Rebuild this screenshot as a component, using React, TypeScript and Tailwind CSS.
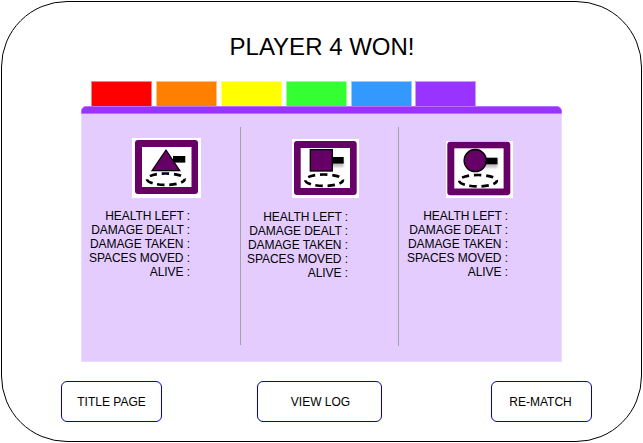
import React from "react";

type Shape = "triangle" | "square" | "circle";

const tabs = [
  "bg-[#ff0000] border-[#ff8080]",
  "bg-[#ff8000] border-[#ffc080]",
  "bg-[#ffff00] border-[#ffff80]",
  "bg-[#33ff33] border-[#99ff99]",
  "bg-[#3399ff] border-[#99ccff]",
  "bg-[#9933ff] border-[#cc99ff] -ml-px",
];

const stats = ["HEALTH LEFT :", "DAMAGE DEALT :", "DAMAGE TAKEN :", "SPACES MOVED :", "ALIVE :"];

function Gun({ x, y }: { x: number; y: number }) {
  return (
    <>
      <rect x={x} y={y + 2} width="15" height="8" fill="#999" filter="url(#soft)" opacity="0.6" />
      <rect x={x} y={y} width="15" height="6.6" fill="#000" />
    </>
  );
}

function Base({ cx, cy }: { cx: number; cy: number }) {
  return (
    <ellipse
      cx={cx}
      cy={cy}
      rx="18.8"
      ry="5.7"
      fill="none"
      stroke="#000"
      strokeWidth="2.7"
      strokeDasharray="7.2 4.7"
      strokeDashoffset="2"
    />
  );
}

function Piece({ shape }: { shape: Shape }) {
  const soft = (
    <defs>
      <filter id="soft" x="-50%" y="-50%" width="200%" height="200%">
        <feGaussianBlur stdDeviation="1.2" />
      </filter>
    </defs>
  );
  if (shape === "triangle") {
    return (
      <svg width="69" height="60" className="block bg-white">
        <rect x="3" y="2" width="63" height="54" rx="3" fill="#660066" />
        <rect x="10" y="9" width="49.5" height="40" fill="#fff" />
        <rect x="41" y="18" width="12.3" height="6.6" fill="#000" />
        <path d="M34 12 L47.8 32.6 H20 Z" fill="#660066" stroke="#000" strokeWidth="1.2" />
        <Base cx={33.8} cy={41.2} />
      </svg>
    );
  }
  if (shape === "square") {
    return (
      <svg width="67" height="59" className="block bg-white">
        {soft}
        <rect x="2" y="2" width="62.7" height="54" rx="3" fill="#660066" />
        <rect x="8.7" y="9" width="49.3" height="40" fill="#fff" />
        <Gun x={36.7} y={18} />
        <rect x="18.3" y="10.6" width="22" height="21.4" fill="#660066" stroke="#000" strokeWidth="1.3" />
        <Base cx={32.1} cy={41.2} />
      </svg>
    );
  }
  return (
    <svg width="67" height="57" className="block bg-white">
      {soft}
      <rect x="1.3" y="0.7" width="63" height="53.5" rx="3" fill="#660066" />
      <rect x="8.3" y="7.3" width="49.3" height="40.2" fill="#fff" />
      <Gun x={36.5} y={16.7} />
      <circle cx="29.2" cy="19.6" r="11.1" fill="#660066" stroke="#000" strokeWidth="1.3" />
      <Base cx={32} cy={39.7} />
    </svg>
  );
}

function Stats({ className }: { className: string }) {
  return (
    <div className={`text-right text-xs leading-[14px] tracking-[-0.06px] whitespace-nowrap ${className}`}>
      {stats.map((s) => (
        <div key={s}>{s}</div>
      ))}
    </div>
  );
}

function Button({ label, className }: { label: string; className: string }) {
  return (
    <button className={`h-[41px] rounded-[6px] border border-[#0000cc] bg-white text-xs ${className}`}>
      {label}
    </button>
  );
}

export default function App() {
  return (
    <div className="h-[443px] w-[643px] overflow-hidden bg-white p-px font-['Liberation_Sans',Arial,sans-serif] text-black">
      <main className="flex h-[441px] w-[641px] flex-col rounded-[66px] border border-black">
        <h1 className="mt-[31px] h-7 pl-px text-center text-[24px] leading-7">PLAYER 4 WON!</h1>
        <div className="mt-5 ml-[89px] flex gap-1">
          {tabs.map((c) => (
            <div key={c} className={`h-[25px] w-[61px] border border-b-0 ${c}`} />
          ))}
        </div>
        <section className="ml-[79px] h-[256px] w-[481px]">
          <div className="h-2 rounded-t-[5px] border border-[#b870ff] bg-[#9933ff]" />
          <div className="flex h-[248px] border border-t-0 border-[#ecdcff] bg-[#e5ccff]">
            <div className="w-[158px] pt-6">
              <div className="ml-[50px] h-[71px]">
                <Piece shape="triangle" />
              </div>
              <Stats className="w-[108px]" />
            </div>
            <div className="mt-[13px] h-[218px] w-px bg-[#a3a3a3]" />
            <div className="w-[157px] pt-[25px]">
              <div className="ml-[51px] h-[71px]">
                <Piece shape="square" />
              </div>
              <Stats className="w-[107px]" />
            </div>
            <div className="mt-[13px] h-[219px] w-px bg-[#a3a3a3]" />
            <div className="w-[162px] pt-[27px]">
              <div className="ml-[47px] h-[68px]">
                <Piece shape="circle" />
              </div>
              <Stats className="w-[109px]" />
            </div>
          </div>
        </section>
        <nav className="mt-[19px] ml-[59px] flex w-[531px]">
          <Button label="TITLE PAGE" className="w-[101px]" />
          <Button label="VIEW LOG" className="ml-[95px] w-[125px] pl-[2px]" />
          <Button label="RE-MATCH" className="ml-[109px] w-[101px] pr-[2px]" />
        </nav>
      </main>
    </div>
  );
}
